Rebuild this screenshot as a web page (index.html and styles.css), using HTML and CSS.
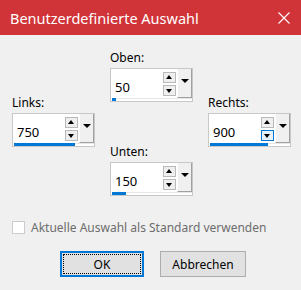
FILE: index.html
```html
<!DOCTYPE html>
<html>
  <head>
    <title>Benutzerdefinierte Auswahl</title>
    <link rel="stylesheet" href="styles.css">
  </head>
  <body>
    <div class="titlebar">
      <span class="title">Benutzerdefinierte Auswahl</span>
      <svg class="close" width="12" height="12" viewBox="0 0 12 12">
        <path d="M0.5 0.5 L11.5 11.5 M11.5 0.5 L0.5 11.5" stroke="#fff" stroke-width="1.1" fill="none"/>
      </svg>
    </div>

    <div class="fields">
      <div class="col side">
        <label>Links:</label>
        <div class="field">
          <div class="row">
            <span class="value">750</span>
            <div class="spin"><span class="btn up"></span><span class="btn down"></span></div>
            <span class="drop"></span>
          </div>
          <div class="bar"><div class="fill" style="width:61px"></div></div>
        </div>
      </div>

      <div class="col middle">
        <label>Oben:</label>
        <div class="field">
          <div class="row">
            <span class="value">50</span>
            <div class="spin"><span class="btn up"></span><span class="btn down"></span></div>
            <span class="drop"></span>
          </div>
          <div class="bar"><div class="fill" style="width:4px"></div></div>
        </div>

        <label class="lower">Unten:</label>
        <div class="field">
          <div class="row">
            <span class="value">150</span>
            <div class="spin"><span class="btn up"></span><span class="btn down"></span></div>
            <span class="drop"></span>
          </div>
          <div class="bar"><div class="fill" style="width:14px"></div></div>
        </div>
      </div>

      <div class="col side">
        <label>Rechts:</label>
        <div class="field">
          <div class="row">
            <span class="value">900</span>
            <div class="spin"><span class="btn up"></span><span class="btn down hover"></span></div>
            <span class="drop"></span>
          </div>
          <div class="bar"><div class="fill" style="width:58px"></div></div>
        </div>
      </div>
    </div>

    <div class="check">
      <span class="box"></span>
      <span class="check-label">Aktuelle Auswahl als Standard verwenden</span>
    </div>

    <div class="buttons">
      <button class="ok"><span class="focus">OK</span></button>
      <button class="cancel">Abbrechen</button>
    </div>
  </body>
</html>
```

FILE: styles.css
```css
body {
  margin: 0;
  width: 301px;
  height: 290px;
  background-color: #f0f0f0;
  font-family: "Noto Sans", "Open Sans", sans-serif;
  font-size: 12px;
  color: #000;
  overflow: hidden;
}

.titlebar {
  height: 35px;
  background-color: #d13438;
  display: flex;
  align-items: center;
  justify-content: space-between;
  padding: 0 11px 0 10px;
}

.title {
  color: #fff;
  font-size: 14.5px;
}

.close {
  margin-top: 1px;
}

.fields {
  display: grid;
  grid-template-columns: 83px 83px 83px;
  column-gap: 15px;
  padding-left: 12px;
}

.col {
  display: flex;
  flex-direction: column;
}

.side {
  padding-top: 60px;
}

.middle {
  padding-top: 15px;
}

label {
  line-height: 15px;
  height: 15px;
  margin-bottom: 3px;
}

label.lower {
  margin-top: 42px;
}

.field {
  box-sizing: border-box;
  height: 34px;
  background-color: #fff;
  border: 1px solid #c8c8c8;
  display: flex;
  flex-direction: column;
}

.row {
  display: flex;
  height: 28px;
}

.value {
  flex: 1;
  padding-left: 4px;
  padding-top: 10px;
  font-size: 13px;
  line-height: 16px;
}

.spin {
  display: flex;
  flex-direction: column;
  gap: 2px;
  padding-top: 3px;
  margin-right: 1px;
}

.btn {
  box-sizing: border-box;
  width: 13px;
  height: 11px;
  background-color: #efefef;
  border: 1px solid #b9b9b9;
  position: relative;
}

.btn::after {
  content: "";
  position: absolute;
  left: 2px;
  border-left: 3.5px solid transparent;
  border-right: 3.5px solid transparent;
}

.up::after {
  top: 2px;
  border-bottom: 4px solid #000;
}

.down::after {
  top: 3px;
  border-top: 4px solid #000;
}

.btn.hover {
  background-color: #e5f1fb;
  border-color: #0078d7;
}

.drop {
  box-sizing: border-box;
  width: 15px;
  height: 29px;
  background-color: #f0f0f0;
  border-left: 1px solid #fff;
  border-right: 1px solid #a0a0a0;
  border-bottom: 1px solid #a0a0a0;
  position: relative;
}

.drop::after {
  content: "";
  position: absolute;
  left: 3px;
  top: 10px;
  border-left: 4px solid transparent;
  border-right: 4px solid transparent;
  border-top: 4px solid #000;
}

.bar {
  margin-top: auto;
  height: 2px;
  margin-left: 1px;
  border-top: 1px solid #e6e6e6;
}

.fill {
  height: 3px;
  margin-top: -1px;
  background-color: #0078d7;
}

.check {
  display: flex;
  align-items: center;
  gap: 6px;
  margin-top: 24px;
  padding-left: 12px;
}

.box {
  box-sizing: border-box;
  width: 13px;
  height: 13px;
  background-color: #fff;
  border: 1px solid #cccccc;
}

.check-label {
  color: #6d6d6d;
  line-height: 15px;
}

.buttons {
  display: flex;
  gap: 16px;
  padding-left: 60px;
  margin-top: 16px;
}

button {
  font-family: inherit;
  font-size: 12px;
  color: #000;
  height: 26px;
  background-color: #e1e1e1;
  border: 1px solid #adadad;
  padding: 0;
}

.ok {
  width: 84px;
  border: 2px solid #0078d7;
  padding: 1px;
}

.focus {
  display: flex;
  align-items: center;
  justify-content: center;
  height: 100%;
  box-sizing: border-box;
  border: 1px dotted #000;
}

.cancel {
  width: 86px;
}
```
